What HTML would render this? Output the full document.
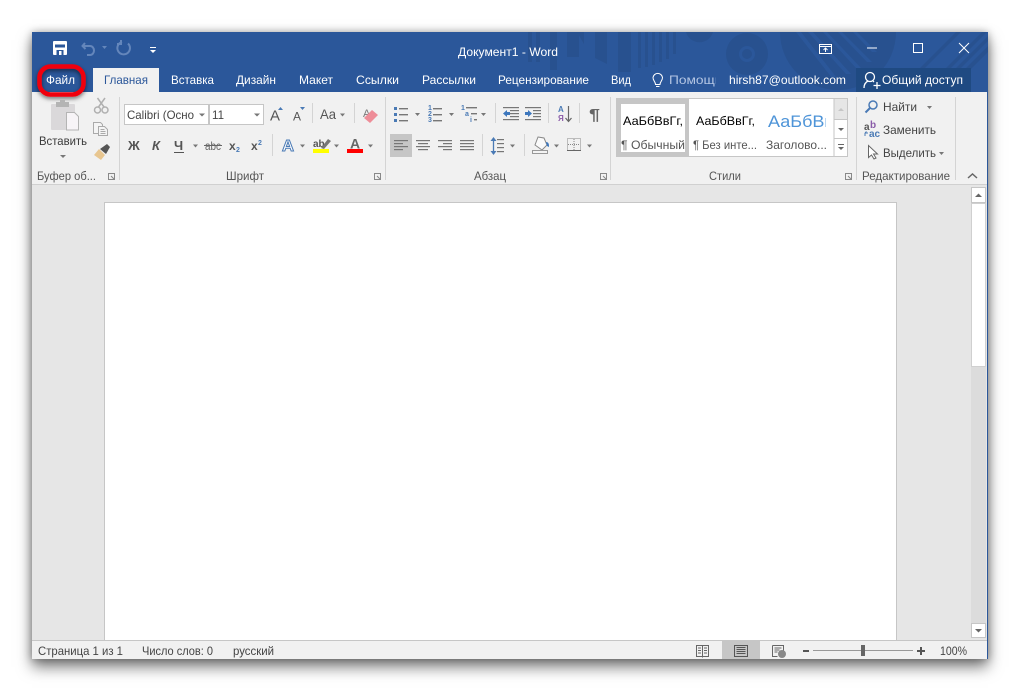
<!DOCTYPE html>
<html><head><meta charset="utf-8"><style>
html,body{margin:0;padding:0;background:#fff;width:1020px;height:691px;overflow:hidden}
#w{position:absolute;left:32px;top:32px;width:956px;height:627px;box-shadow:0 8px 14px rgba(0,0,0,.52),0 0 8px rgba(0,0,0,.3)}
svg{position:absolute;left:0;top:0}
text{font-family:"Liberation Sans",sans-serif;font-size:12px;fill:#444}
.t{fill:#fff}
</style></head><body>
<div id="w"></div>
<svg width="1020" height="691" viewBox="0 0 1020 691">
<defs>
<clipPath id="tb"><rect x="32" y="32" width="956" height="60"/></clipPath>
<clipPath id="hp"><rect x="669" y="70" width="47" height="20"/></clipPath>
<clipPath id="st"><rect x="767" y="105" width="59" height="30"/></clipPath>
<filter id="gl" x="-30%" y="-30%" width="160%" height="170%"><feDropShadow dx="0" dy="2" stdDeviation="2" flood-color="#000" flood-opacity=".55"/></filter>
</defs>
<!-- frame -->
<rect x="32" y="32" width="956" height="627" fill="#f1f1f1"/>
<rect x="32" y="32" width="956" height="60" fill="#2b579a"/>
<rect x="987" y="92" width="1" height="567" fill="#2b579a"/>
<!-- title pattern -->
<g clip-path="url(#tb)" fill="#28518f">
<rect x="528" y="32" width="4" height="30"/><rect x="536" y="32" width="4" height="30"/><rect x="550" y="32" width="7" height="38"/>
<rect x="567" y="32" width="12" height="25"/><path d="M595 32h12v32l-12-6zM577 32h7v12z"/>
<rect x="618" y="32" width="13" height="40"/>
<rect x="638" y="32" width="3" height="36"/><rect x="645" y="32" width="3" height="35"/><rect x="652" y="32" width="3" height="33"/><rect x="659" y="32" width="3" height="30"/><rect x="666" y="32" width="3" height="27"/><rect x="673" y="32" width="3" height="22"/>
<path d="M686 32h27a14 14 0 0 1-27 0z"/>
<path fill-rule="evenodd" d="M747 33a21 21 0 1 1 0 42a21 21 0 1 1 0-42zm0 13a8 8 0 1 0 0 16a8 8 0 1 0 0-16z"/>
<circle cx="747" cy="54" r="5"/>
<circle cx="838" cy="32" r="58"/>
<g fill="#2b579a"><path d="M796 32h5l36 46h-5zM808 32h5l38 42h-5zM823 32h4l34 36h-5zM838 32h4l30 30h-5zM853 32h4l20 20h-5z"/></g>
<path d="M922 92l60-60h5l-60 60zM932 92l60-60h5l-60 60zM912 76l44-44h5l-44 44zM942 92l50-50v6l-44 44z"/>
</g>
<!-- QAT -->
<rect x="53" y="41" width="14" height="14" rx="1" fill="#fff"/>
<rect x="55" y="44.500" width="10" height="3" fill="#2b579a"/><rect x="56.500" y="50" width="7" height="5" fill="#2b579a"/><rect x="59" y="51" width="2.500" height="4" fill="#fff"/>
<g fill="none" stroke="#6486bb" stroke-width="2"><path d="M85 43l-2.500 3 3 3M83 46h7a4 4.500 0 0 1 0 9h-3"/><path d="M129 43.500a6.300 6.300 0 1 1-6-1.500M122 40v4h-4" transform="translate(-1 0)"/></g>
<path d="M102 46h5l-2.500 3z" fill="#6486bb"/>
<rect x="150" y="47" width="6" height="1" fill="#fff"/><path d="M150 50h6l-3 3z" fill="#fff"/>
<text class="t" x="458" y="56" textLength="100" lengthAdjust="spacingAndGlyphs">Документ1 - Word</text>
<!-- window controls -->
<g fill="none" stroke="#fff"><rect x="819.500" y="44.500" width="12" height="9"/><path d="M819.500 46.500h12M825.500 52v-4M823.500 50l2-2 2 2"/></g>
<rect x="867" y="47.500" width="10" height="1" fill="#fff"/>
<rect x="913.500" y="43.500" width="9" height="9" fill="none" stroke="#fff"/>
<path d="M959 43l10 10M969 43l-10 10" stroke="#fff" fill="none"/>
<!-- tabs -->
<rect x="93" y="68" width="66" height="24" fill="#f1f1f1"/>
<rect x="856" y="68" width="115" height="24" fill="#1f4a82"/>
<text class="t" x="46" y="84" textLength="29" lengthAdjust="spacingAndGlyphs">Файл</text>
<text x="104" y="84" textLength="44" lengthAdjust="spacingAndGlyphs" style="fill:#2b579a">Главная</text>
<text class="t" x="171" y="84" textLength="43" lengthAdjust="spacingAndGlyphs">Вставка</text>
<text class="t" x="236" y="84" textLength="40" lengthAdjust="spacingAndGlyphs">Дизайн</text>
<text class="t" x="299" y="84" textLength="34" lengthAdjust="spacingAndGlyphs">Макет</text>
<text class="t" x="356" y="84" textLength="43" lengthAdjust="spacingAndGlyphs">Ссылки</text>
<text class="t" x="422" y="84" textLength="54" lengthAdjust="spacingAndGlyphs">Рассылки</text>
<text class="t" x="498" y="84" textLength="91" lengthAdjust="spacingAndGlyphs">Рецензирование</text>
<text class="t" x="611" y="84" textLength="20" lengthAdjust="spacingAndGlyphs">Вид</text>
<g fill="none" stroke="#fff"><path d="M655.500 84.500c0-3-2.500-3.500-2.500-7a4.800 4.800 0 0 1 9.500 0c0 3.500-2.500 4-2.500 7zM656 86.500h3.500"/></g>
<g clip-path="url(#hp)"><text x="669" y="84" textLength="53" lengthAdjust="spacingAndGlyphs" style="fill:#b4c6e4">Помощь</text></g>
<text class="t" x="729" y="84" textLength="117" lengthAdjust="spacingAndGlyphs">hirsh87@outlook.com</text>
<g fill="none" stroke="#fff" stroke-width="1.300"><circle cx="870" cy="77" r="4.500"/><path d="M864 88c0-4 2-6 4-7M873 81l1 1M873.500 85.500h7M877 82v7"/></g>
<text class="t" x="882" y="84" textLength="81" lengthAdjust="spacingAndGlyphs">Общий доступ</text>
<!-- Highlight -->
<rect x="39.500" y="66.500" width="44" height="28" rx="11" fill="none" stroke="#f0000f" stroke-width="4.500" filter="url(#gl)"/>
<!-- ribbon borders -->
<rect x="32" y="184" width="955" height="1" fill="#d0d0d0"/>
<g fill="#d4d4d4"><rect x="119" y="97" width="1" height="83"/><rect x="385" y="97" width="1" height="83"/><rect x="610" y="97" width="1" height="83"/><rect x="856" y="97" width="1" height="83"/><rect x="955" y="97" width="1" height="83"/>
<rect x="312" y="103" width="1" height="20"/><rect x="354" y="103" width="1" height="20"/><rect x="272" y="134" width="1" height="22"/>
<rect x="495" y="103" width="1" height="20"/><rect x="548" y="103" width="1" height="20"/><rect x="579" y="103" width="1" height="20"/><rect x="482" y="134" width="1" height="22"/><rect x="524" y="134" width="1" height="22"/></g>
<!-- clipboard -->
<rect x="51" y="104" width="24" height="26" rx="1" fill="#dad8da"/><rect x="56" y="102" width="13" height="5" fill="#b4b4b4"/><rect x="60" y="100" width="5" height="3" fill="#b4b4b4"/>
<path d="M66.500 112.500h8l4 4v13.500h-12z" fill="#f7f4f7" stroke="#b4b4b4"/>
<text x="39" y="145" textLength="48" lengthAdjust="spacingAndGlyphs" style="fill:#3a3a3a">Вставить</text>
<path d="M60 155h6l-3 3z" fill="#777"/>
<!-- scissors -->
<g fill="none" stroke="#b0b0b0" stroke-width="1.500"><circle cx="97.500" cy="110" r="3"/><circle cx="105" cy="110" r="3"/><path d="M98.500 107L105 98M104 107L97.500 98"/></g>
<!-- copy -->
<g fill="#f4f4f4" stroke="#aaa"><path d="M93.500 122.500h7l2 2v9h-9z"/><path d="M98.500 126.500h6l3 3v6h-9z"/></g>
<path d="M100.500 129.500h4M100.500 131.500h5M100.500 133.500h5" stroke="#aaa"/>
<!-- painter -->
<path d="M94 155l5-6 6 6-4 5z" fill="#e8c690"/><path d="M100 149l7-5 3 3-4 7z" fill="#555"/>
<!-- group labels -->
<text x="37" y="180" textLength="59" lengthAdjust="spacingAndGlyphs" style="fill:#555">Буфер об...</text>
<text x="226" y="180" textLength="38" lengthAdjust="spacingAndGlyphs" style="fill:#555">Шрифт</text>
<text x="474" y="180" textLength="32" lengthAdjust="spacingAndGlyphs" style="fill:#555">Абзац</text>
<text x="709" y="180" textLength="32" lengthAdjust="spacingAndGlyphs" style="fill:#555">Стили</text>
<text x="862" y="180" textLength="88" lengthAdjust="spacingAndGlyphs" style="fill:#555">Редактирование</text>
<g fill="none" stroke="#888"><path d="M108.500 173.500h6v6h-6zM111 176l3 3"/>
<path d="M374.500 173.500h6v6h-6zM377 176l3 3"/>
<path d="M600.500 173.500h6v6h-6zM603 176l3 3"/>
<path d="M845.500 173.500h6v6h-6zM848 176l3 3"/></g>
<path d="M968 178l4.500-4 4.500 4" fill="none" stroke="#666" stroke-width="1.500"/>
<!-- font boxes -->
<rect x="124.500" y="104.500" width="84" height="20" fill="#fff" stroke="#c6c6c6"/>
<rect x="209.500" y="104.500" width="54" height="20" fill="#fff" stroke="#c6c6c6"/>
<text x="127" y="119" textLength="67" lengthAdjust="spacingAndGlyphs" style="fill:#444">Calibri (Осно</text>
<text x="212" y="119" textLength="12" lengthAdjust="spacingAndGlyphs" style="fill:#444">11</text>
<path d="M199 113.500h6l-3 3zM254 113.500h6l-3 3z" fill="#777"/>
<!-- A A Aa -->
<text x="270" y="120.500" textLength="10" lengthAdjust="spacingAndGlyphs" style="font-size:15px;fill:#555">A</text><path d="M278 110h5l-2.500-3z" fill="#4a7ab5"/>
<text x="293" y="120.500" textLength="8" lengthAdjust="spacingAndGlyphs" style="font-size:12px;fill:#555">A</text><path d="M300 107h5l-2.500 3z" fill="#4a7ab5"/>
<text x="320" y="119" style="font-size:14px;fill:#555" textLength="16" lengthAdjust="spacingAndGlyphs">Aa</text><path d="M340 113.500h5l-2.500 3z" fill="#777"/>
<!-- eraser -->
<text x="363" y="117" style="font-size:11px;fill:#777">A</text><path d="M364 118l8-8 6 5-8 8z" fill="#ee8d98"/>
<!-- B I U row -->
<text x="128" y="150" style="font-weight:bold;font-size:13px;fill:#555">Ж</text>
<text x="152" y="150" style="font-weight:bold;font-style:italic;font-size:13px;fill:#555">К</text>
<text x="174" y="150" style="font-weight:bold;font-size:13px;fill:#555">Ч</text><rect x="174" y="152" width="10" height="1" fill="#555"/>
<path d="M193 144.500h5l-2.500 3z" fill="#777"/>
<text x="205" y="150" textLength="16" lengthAdjust="spacingAndGlyphs" style="fill:#666">abc</text><rect x="204" y="145" width="18" height="1" fill="#666"/>
<text x="229" y="150" style="font-weight:bold;fill:#555">x</text><text x="236" y="152" style="font-size:7px;font-weight:bold;fill:#4a7ab5">2</text>
<text x="251" y="150" style="font-weight:bold;fill:#555">x</text><text x="258" y="145" style="font-size:7px;font-weight:bold;fill:#4a7ab5">2</text>
<!-- text effects -->
<text x="282" y="151" textLength="12" lengthAdjust="spacingAndGlyphs" style="font-size:16px;font-weight:bold;fill:#fff;stroke:#4a7ab5;stroke-width:1">A</text><path d="M300 144.500h5l-2.500 3z" fill="#777"/>
<text x="313" y="147" style="font-size:10px;font-weight:bold;fill:#555">ab</text><path d="M321 148l7-9 3 2-7 8z" fill="#777"/><rect x="313" y="149" width="16" height="4" fill="#ffff00"/><path d="M334 144.500h5l-2.500 3z" fill="#777"/>
<text x="350" y="148.500" style="font-size:14px;font-weight:bold;fill:#666">A</text><rect x="347" y="149" width="16" height="4" fill="#f00"/><path d="M368 144.500h5l-2.500 3z" fill="#777"/>
<!-- lists -->
<g fill="#4a7ab5"><rect x="394" y="107" width="3" height="3"/><rect x="394" y="113" width="3" height="3"/><rect x="394" y="119" width="3" height="3"/></g>
<g fill="#777"><rect x="399" y="108" width="9" height="1.400"/><rect x="399" y="114" width="9" height="1.400"/><rect x="399" y="120" width="9" height="1.400"/>
<rect x="433" y="108" width="9" height="1.400"/><rect x="433" y="114" width="9" height="1.400"/><rect x="433" y="120" width="9" height="1.400"/>
<rect x="466" y="107" width="11" height="1.400"/><rect x="471" y="113" width="6" height="1.400"/><rect x="474" y="119" width="3" height="1.400"/>
<path d="M415 113h5l-2.500 3zM449 113h5l-2.500 3zM481 113h5l-2.500 3z"/></g>
<text x="428" y="110" style="font-size:7px;font-weight:bold;fill:#4a7ab5">1</text><text x="428" y="116" style="font-size:7px;font-weight:bold;fill:#4a7ab5">2</text><text x="428" y="122" style="font-size:7px;font-weight:bold;fill:#4a7ab5">3</text>
<text x="461" y="110" style="font-size:7px;font-weight:bold;fill:#4a7ab5">1</text><text x="465" y="116" style="font-size:7px;font-weight:bold;fill:#4a7ab5">a</text><text x="470" y="122" style="font-size:7px;font-weight:bold;fill:#4a7ab5">i</text>
<!-- indents -->
<g fill="#777"><rect x="503" y="107" width="16" height="1.200"/><rect x="510" y="110" width="9" height="1.200"/><rect x="510" y="113" width="9" height="1.200"/><rect x="510" y="116" width="9" height="1.200"/><rect x="503" y="119" width="16" height="1.200"/>
<rect x="525" y="107" width="16" height="1.200"/><rect x="533" y="110" width="8" height="1.200"/><rect x="533" y="113" width="8" height="1.200"/><rect x="533" y="116" width="8" height="1.200"/><rect x="525" y="119" width="16" height="1.200"/></g>
<path d="M503 113.500l4-3.500v2h3v3h-3v2z" fill="#3d77bd"/><path d="M532 113.500l-4-3.500v2h-3v3h3v2z" fill="#3d77bd"/>
<!-- sort -->
<text x="558" y="112" style="font-size:8px;font-weight:bold;fill:#4a7ab5">А</text><text x="558" y="121" style="font-size:8px;font-weight:bold;fill:#8a5ca8">Я</text>
<path d="M568.500 106v15M565.500 118l3 3.500 3-3.500" fill="none" stroke="#666" stroke-width="1.200"/>
<text x="589" y="120" textLength="11" lengthAdjust="spacingAndGlyphs" style="font-size:16px;font-weight:bold;fill:#666">¶</text>
<!-- align -->
<rect x="390" y="134" width="22" height="23" fill="#c6c6c6"/>
<g fill="#777"><rect x="394" y="140" width="14" height="1.200"/><rect x="394" y="143" width="9" height="1.200"/><rect x="394" y="146" width="14" height="1.200"/><rect x="394" y="149" width="9" height="1.200"/>
<rect x="416" y="140" width="14" height="1.200"/><rect x="418" y="143" width="10" height="1.200"/><rect x="416" y="146" width="14" height="1.200"/><rect x="418" y="149" width="10" height="1.200"/>
<rect x="438" y="140" width="14" height="1.200"/><rect x="443" y="143" width="9" height="1.200"/><rect x="438" y="146" width="14" height="1.200"/><rect x="443" y="149" width="9" height="1.200"/>
<rect x="460" y="140" width="14" height="1.200"/><rect x="460" y="143" width="14" height="1.200"/><rect x="460" y="146" width="14" height="1.200"/><rect x="460" y="149" width="14" height="1.200"/>
<rect x="497" y="139" width="7" height="1.200"/><rect x="497" y="143" width="7" height="1.200"/><rect x="497" y="147" width="7" height="1.200"/><rect x="497" y="151" width="7" height="1.200"/></g>
<path d="M493.500 139v14" stroke="#4a7ab5" stroke-width="1.300"/><path d="M490.500 141l3-4 3 4zM490.500 151l3 4 3-4z" fill="#4a7ab5"/>
<path d="M510 144.500h5l-2.500 3z" fill="#777"/>
<!-- shading -->
<path d="M538 137l6 1 3 7-5 5-7-5z" fill="#fafafa" stroke="#888"/><path d="M546 142c3 0 3 3 3 5l-2-1z" fill="#3d77bd"/><rect x="532.500" y="150.500" width="15" height="3" fill="#f4f4f4" stroke="#999"/>
<path d="M554 144.500h5l-2.500 3z" fill="#777"/>
<!-- borders -->
<rect x="567.500" y="138.500" width="13" height="12" fill="none" stroke="#888" stroke-dasharray="1 1"/><path d="M574 139v12M568 144.500h12" stroke="#888" stroke-dasharray="1 1"/><rect x="567" y="150" width="14" height="1" fill="#666"/>
<path d="M587 144.500h5l-2.500 3z" fill="#777"/>
<!-- styles -->
<rect x="616.500" y="98.500" width="231" height="58" fill="#fff" stroke="#c6c6c6"/>
<path d="M616 98h73v59h-73zM621 104v48h64v-48z" fill="#c6c6c6" fill-rule="evenodd"/>
<text x="623" y="125" textLength="60" lengthAdjust="spacingAndGlyphs" style="fill:#000">АаБбВвГг,</text>
<text x="621" y="149" textLength="64" lengthAdjust="spacingAndGlyphs" style="fill:#555">¶ Обычный</text>
<text x="696" y="125" textLength="59" lengthAdjust="spacingAndGlyphs" style="fill:#000">АаБбВвГг,</text>
<text x="693" y="149" textLength="64" lengthAdjust="spacingAndGlyphs" style="fill:#555">¶ Без инте...</text>
<g clip-path="url(#st)"><text x="768" y="127" textLength="66" lengthAdjust="spacingAndGlyphs" style="fill:#4e94d8;font-size:17px">АаБбВв</text></g>
<text x="766" y="149" textLength="61" lengthAdjust="spacingAndGlyphs" style="fill:#555">Заголово...</text>
<rect x="834" y="99" width="13" height="20" fill="#e6e6e6"/>
<path d="M834 98.500v58M834 119.500h14M834 138.500h14" stroke="#c6c6c6" fill="none"/>
<path d="M838 111l3-3 3 3z" fill="#c6c6c6"/><path d="M838 128h6l-3 3z" fill="#666"/><rect x="838" y="144" width="6" height="1" fill="#666"/><path d="M838 147h6l-3 3z" fill="#666"/>
<!-- editing -->
<g fill="none" stroke="#4a7ab5" stroke-width="1.500"><circle cx="873" cy="105" r="4"/><path d="M870 108l-4.500 4.500" stroke-width="2"/></g>
<text x="883" y="111" textLength="34" lengthAdjust="spacingAndGlyphs" style="fill:#444">Найти</text>
<path d="M927 106h5l-2.500 3z" fill="#777"/>
<text x="864" y="130" style="font-size:10px;font-weight:bold;fill:#555">a</text><text x="870" y="128" style="font-size:10px;font-weight:bold;fill:#8a5ca8">b</text><text x="869" y="137" style="font-size:10px;font-weight:bold;fill:#4a7ab5">ac</text><path d="M865 133h3M865 133l1.500-1.500M865 133v3" stroke="#4a7ab5" fill="none"/>
<text x="883" y="134" textLength="53" lengthAdjust="spacingAndGlyphs" style="fill:#444">Заменить</text>
<path d="M868.500 145.500v12l3-2.500 2.500 4 2-1-2.500-4h4z" fill="#fff" stroke="#666"/>
<text x="883" y="157" textLength="53" lengthAdjust="spacingAndGlyphs" style="fill:#444">Выделить</text>
<path d="M939 152h5l-2.500 3z" fill="#777"/>
<!-- document area -->
<rect x="32" y="185" width="955" height="455" fill="#e6e6e6"/>
<rect x="104.500" y="202.500" width="792" height="438" fill="#fff" stroke="#c6c6c6"/>
<rect x="971" y="187" width="15" height="451" fill="#dcdcdc"/>
<rect x="971.500" y="187.500" width="14" height="15" fill="#fff" stroke="#c6c6c6"/>
<path d="M975 197l3.500-3.500 3.500 3.500z" fill="#666"/>
<rect x="971.500" y="203.500" width="14" height="163" fill="#fff" stroke="#d0d0d0"/>
<rect x="971.500" y="623.500" width="14" height="14" fill="#fff" stroke="#c6c6c6"/>
<path d="M975 629h7l-3.500 3.500z" fill="#666"/>
<!-- status bar -->
<rect x="32" y="640" width="955" height="1" fill="#c6c6c6"/>
<rect x="32" y="641" width="955" height="18" fill="#f1f1f1"/>
<text x="38" y="655" textLength="85" lengthAdjust="spacingAndGlyphs" style="fill:#444">Страница 1 из 1</text>
<text x="142" y="655" textLength="71" lengthAdjust="spacingAndGlyphs" style="fill:#444">Число слов: 0</text>
<text x="233" y="655" textLength="41" lengthAdjust="spacingAndGlyphs" style="fill:#444">русский</text>
<g fill="none" stroke="#666"><path d="M696.500 645.500h12v11h-12zM702.500 645.500v12M698 648h3M698 650.500h3M698 653h3M704 648h3M704 650.500h3M704 653h3"/></g>
<rect x="722" y="641" width="38" height="18" fill="#c6c6c6"/>
<g fill="none" stroke="#555"><rect x="734.500" y="645.500" width="13" height="11"/><path d="M736.500 647.500h9M736.500 649.500h9M736.500 651.500h9M736.500 653.500h9"/></g>
<g fill="none" stroke="#666"><path d="M772.500 645.500h11v6M772.500 645.500v11h5M774.500 648h7M774.500 650h5M774.500 652h3"/></g>
<circle cx="782" cy="654" r="4" fill="#888"/>
<rect x="803" y="650" width="6" height="2" fill="#555"/>
<rect x="813" y="650" width="100" height="1" fill="#999"/>
<rect x="861" y="645" width="4" height="11" fill="#666"/>
<path d="M917 650h8v2h-8zM920 647h2v8h-2z" fill="#555"/>
<text x="940" y="655" textLength="27" lengthAdjust="spacingAndGlyphs" style="fill:#444">100%</text>
</svg>
</body></html>
